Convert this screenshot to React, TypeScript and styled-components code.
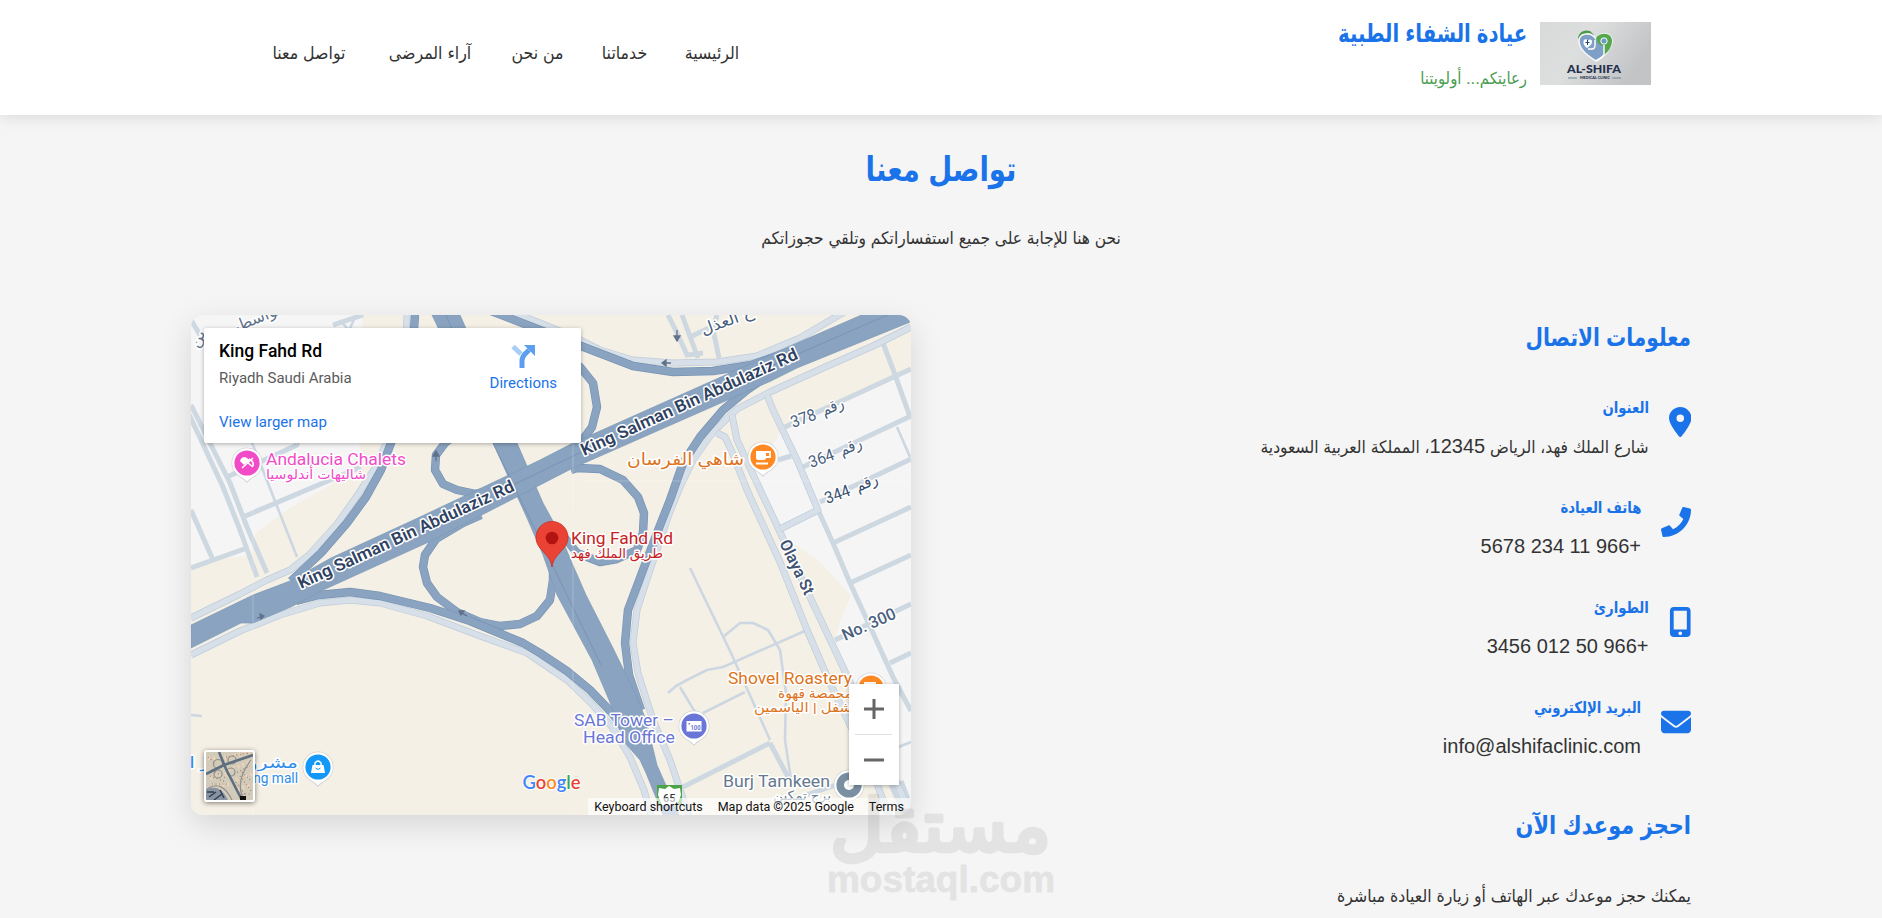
import React from 'react';
import styled, { createGlobalStyle } from 'styled-components';
import { FaLocationDot, FaMobileScreenButton, FaEnvelope } from 'react-icons/fa6';
import { FaPhone } from 'react-icons/fa';

const BLUE = '#1a73e8';
const UI = "'Liberation Sans', 'DejaVu Sans Condensed', 'DejaVu Sans', sans-serif";
const MAP_FONT = "Roboto, 'DejaVu Sans Condensed', 'DejaVu Sans', sans-serif";

const GlobalStyle = createGlobalStyle`
  * { box-sizing: border-box; }
  html, body { margin: 0; overflow: hidden; }
  body { background: #f5f5f5; color: #333; font-family: ${UI}; }
  h1, h2, h3, h4, p { margin: 0; }
`;

const Page = styled.div`
  position: relative;
  height: 918px;
  overflow: hidden;
  background: #f5f5f5;
`;

const Header = styled.header`
  position: relative;
  height: 115px;
  background: #fff;
  box-shadow: 0 2.5px 14px rgba(0, 0, 0, 0.1);
`;

const HeaderInner = styled.div`
  display: flex;
  justify-content: space-between;
  align-items: flex-start;
  width: 1420px;
  margin: 0 auto;
`;

const Brand = styled.div`
  display: flex;
  align-items: flex-start;
  gap: 13px;
  padding-top: 22px;
`;

const Logo = styled.svg`
  display: block;
  width: 111px;
  height: 63px;
  direction: ltr;
`;

const BrandText = styled.div`
  display: flex;
  flex-direction: column;
  white-space: nowrap;
`;

const BrandName = styled.h1`
  margin-top: -9px;
  font-size: 25.5px;
  line-height: 40px;
  color: ${BLUE};
  transform: scaleX(0.855);
  transform-origin: right;
`;

const Tagline = styled.p`
  margin-top: 9px;
  font-size: 16.5px;
  line-height: 32px;
  color: #4a9d4e;
`;

const Nav = styled.nav`
  display: flex;
  gap: 40px;
  padding: 37px 0 0 40px;
`;

const NavLink = styled.a<{ $width: number }>`
  display: flex;
  justify-content: center;
  width: ${(p) => p.$width}px;
  font-size: 17.6px;
  line-height: 32px;
  white-space: nowrap;
  color: #333;
`;

const Main = styled.main`
  width: 1500px;
  margin: 0 auto;
  padding-top: 34px;
`;

const PageTitle = styled.h2`
  font-size: 34px;
  line-height: 40px;
  text-align: center;
  color: ${BLUE};
  transform: scaleX(0.9);
`;

const Lead = styled.p`
  margin-top: 34px;
  font-size: 17.2px;
  line-height: 30px;
  text-align: center;
`;

const Columns = styled.div`
  display: flex;
  justify-content: space-between;
  margin-top: 62px;
`;

const Info = styled.section`
  display: flex;
  flex-direction: column;
  width: 720px;
  padding-top: 2px;
`;

const SectionTitle = styled.h3<{ $top?: number; $stretch?: number }>`
  margin-top: ${(p) => p.$top ?? 0}px;
  font-size: 25px;
  line-height: 40px;
  color: ${BLUE};
  transform: scaleX(${(p) => p.$stretch ?? 0.895});
  transform-origin: right;
`;

const ContactList = styled.div`
  display: flex;
  flex-direction: column;
  gap: 31px;
  margin-top: 36px;
`;

const ContactRow = styled.div`
  display: flex;
  gap: 20px;
  height: 69px;
`;

const IconSlot = styled.span<{ $width: number }>`
  display: block;
  flex: none;
  width: ${(p) => p.$width}px;
  height: 30px;
  margin-top: 14px;
  color: ${BLUE};
  svg { display: block; width: 100%; height: 100%; }
`;

const ContactText = styled.div`
  display: flex;
  flex-direction: column;
  gap: 8px;
  padding-top: 1px;
`;

const ContactLabel = styled.h4`
  font-size: 16px;
  line-height: 28px;
  color: ${BLUE};
  transform: scaleX(0.92);
  transform-origin: right;
`;

const ContactValue = styled.p`
  font-size: 20px;
  line-height: 32px;
  white-space: nowrap;
`;

const Words = styled.span`
  font-size: 17.3px;
`;

const BookingNote = styled.p`
  margin-top: 36px;
  font-size: 17.5px;
  line-height: 30px;
`;

const MapFrame = styled.section`
  position: relative;
  width: 720px;
  height: 500px;
  border-radius: 12px;
  overflow: hidden;
  direction: ltr;
  font-family: ${MAP_FONT};
`;

const MapShadow = styled.div`
  height: 500px;
  border-radius: 12px;
  box-shadow: 0 10px 32px rgba(0, 0, 0, 0.13);
`;

const MapSvg = styled.svg`
  display: block;
  font-family: ${MAP_FONT};
`;

const PlaceCard = styled.div`
  position: absolute;
  top: 13px;
  left: 13px;
  display: flex;
  justify-content: space-between;
  width: 377px;
  height: 115px;
  padding: 12px 24px 0 15px;
  border-radius: 2px;
  background: #fff;
  box-shadow: 0 1px 4px rgba(0, 0, 0, 0.3);
`;

const PlaceText = styled.div`
  display: flex;
  flex-direction: column;
`;

const PlaceName = styled.span`
  font-size: 17.5px;
  font-weight: 500;
  line-height: 22px;
  color: #000;
`;

const PlaceArea = styled.span`
  margin-top: 6px;
  font-size: 15px;
  line-height: 20px;
  color: #5b5b5b;
`;

const CardLink = styled.a<{ $top: number }>`
  margin-top: ${(p) => p.$top}px;
  font-size: 15px;
  line-height: 20px;
  color: ${BLUE};
`;

const DirectionsBox = styled.div`
  display: flex;
  flex-direction: column;
  align-items: center;
  padding-top: 4px;
`;

const ZoomControl = styled.div`
  position: absolute;
  top: 369px;
  left: 658px;
  display: flex;
  flex-direction: column;
  width: 50px;
  height: 101px;
  background: #fff;
  box-shadow: 0 1px 4px rgba(0, 0, 0, 0.3);
`;

const Thumb = styled.div`
  position: absolute;
  top: 435px;
  left: 13px;
  width: 51px;
  height: 52px;
  border: 2px solid #fff;
  border-radius: 3px;
  overflow: hidden;
  box-shadow: 0 1px 5px rgba(0, 0, 0, 0.5);
  svg { display: block; }
`;

const Credits = styled.div`
  position: absolute;
  right: 0;
  bottom: 0;
  display: flex;
  gap: 15px;
  height: 17px;
  padding: 0 7px 0 6px;
  background: rgba(255, 255, 255, 0.65);
  font-size: 12.5px;
  line-height: 18px;
  white-space: nowrap;
  color: #111;
`;

const Watermark = styled.svg`
  position: absolute;
  left: 820px;
  top: 790px;
  opacity: 0.085;
`;

type Pt = string;
const DARK = '#8aa3c0';
const LIGHT = '#d7dfe8';
const STREET = '#cdd8e1';

const Road = ({ d, w, c }: { d: Pt; w: number; c: string }) => (
  <path d={`M${d}`} fill="none" stroke={c} strokeWidth={w} strokeLinejoin="round" />
);

const CasedRoad = ({ d, w = 7 }: { d: Pt; w?: number }) => (
  <>
    <Road d={d} w={w} c="#bfcddb" />
    <Road d={d} w={w - 1.4} c={LIGHT} />
  </>
);

interface LabelProps {
  x: number;
  y: number;
  len: number;
  size: number;
  color: string;
  text: string;
  rotate?: number;
  weight?: number;
  rtl?: boolean;
}

const Label = ({ x, y, len, size, color, text, rotate = 0, weight = 400, rtl }: LabelProps) => (
  <text
    x={rtl ? x + len : x}
    y={y}
    transform={rotate ? `rotate(${rotate} ${x} ${y})` : undefined}
    textLength={len}
    lengthAdjust="spacingAndGlyphs"
    fontSize={size}
    fontWeight={weight}
    fill={color}
    stroke="#fff"
    strokeWidth="3"
    strokeLinejoin="round"
    paintOrder="stroke"
    direction={rtl ? 'rtl' : 'ltr'}
  >
    {text}
  </text>
);

const Pin = ({ x, y, color, children }: { x: number; y: number; color: string; children?: React.ReactNode }) => (
  <g transform={`translate(${x} ${y})`}>
    <path d="M0 20 C-3 16-7 15-11 11 A15.5 15.5 0 1 1 11 11 C7 15 3 16 0 20Z" fill="#b9bec6" opacity=".6" />
    <path d="M0 18.5 C-3 15-7 14-10.5 10.5 A14.8 14.8 0 1 1 10.5 10.5 C7 14 3 15 0 18.5Z" fill="#fff" />
    <circle r="12.6" fill={color} />
    {children}
  </g>
);

const darkRamps: Pt[] = [
  '375,40 390,53 402,68 406,92 401,112 388,130 378,138',
  '262,122 254,128 245,140 244,155 252,169 266,175 285,179 310,172',
  '380,155 386,153 409,154 432,165 447,182 453,198 452,218 446,235 426,244 409,247 386,238 370,218',
  '290,200 272,208 245,224 234,240 232,252 236,268 246,282 266,297 289,307 309,311 329,309 346,301 359,285 362,265 362,245',
  '105,286 128,280 159,277 189,281 239,293 279,306 332,328 349,338 376,356 399,375 421,398 445,430',
  '224,0 220,60 200,128 190,155 175,182 156,208 130,238 100,266',
  '300,-4 349,15 390,31 442,51 482,57 522,56 560,50 600,36',
  '575,62 556,75 532,95 509,122 492,148 479,185 466,218 452,255 437,295 434,328 438,360 450,395',
];

const lightRoads: Pt[] = [
  '0,340 49,316 89,300 129,288 159,285 189,288 236,301 289,321 336,338 376,365 399,387 421,412 439,442 453,475 461,504',
  '216,0 213,60 195,128 186,150 168,178 146,209 118,240 99,255 76,265 49,279 0,303',
  '318,-4 349,8 379,20 409,35 442,45 482,48 526,47 566,41 609,23 655,-4',
  '720,12 682,31 632,53 579,77 546,94 522,117 502,145 489,172 477,202 459,255 446,295 442,328 447,358 462,405 479,445 499,504',
  '541,100 546,125 566,168 589,217 619,282 659,367 700,455 720,500',
  '526,118 534,122 541,137 556,175 589,247 616,315 639,368 682,458 699,504',
  '576,80 582,95 606,145 627,195 589,214',
];

const streets: Pt[] = [
  '594,112 720,54', '612,152 720,101', '629,187 720,144', '642,228 720,192', '659,268 720,240',
  '644,325 720,289', '699,348 720,338', '692,28 703,57 719,102', '627,195 642,228 659,268 682,318 702,362 720,396',
  '0,90 39,168 56,212 76,258', '-4,95 32,172 49,215 66,262', '0,195 22,245', '36,162 106,130',
  '52,202 132,168 170,152', '0,253 56,233', '477,0 486,18 497,42', '491,0 507,43', '499,22 520,12', '526,0 522,14 528,43',
  '492,472 579,428', '579,428 597,462', '142,10 172,0', '0,5 12,25', '497,40 512,38', '587,145 600,141',
  '700,470 714,500', '710,466 720,492', '615,480 645,470',
];

const thinStreets: Pt[] = [
  '499,253 540,338 579,425', '532,322 549,308 562,308 577,315 589,335 595,378 594,425 600,465',
  '616,315 532,352 516,355 496,365 485,371 477,378', '489,372 504,397', '512,398 554,377', '60,125 106,242',
  '106,132 165,0', '706,112 719,142', '0,400 11,401', '149,5 160,18', '705,433 720,427',
];

const MapCanvas = () => (
  <MapSvg width="720" height="500" viewBox="0 0 720 500">
    <rect width="720" height="500" fill="#f5f0e5" />
    <path d="M0 0H172L168 128 170 140 140 170 100 192 65 218 60 240 15 246 0 253Z" fill="#f5f5f6" />
    <path d="M592 112L720 54V500H712L644 325 648 310 660 280 626 244 592 222 562 160 583 128Z" fill="#f5f5f6" />
    {streets.map((d) => <Road key={d} d={d} w={5} c={STREET} />)}
    {thinStreets.map((d) => <Road key={d} d={d} w={2.6} c="#ccd7e2" />)}
    {lightRoads.map((d) => <CasedRoad key={d} d={d} />)}
    {darkRamps.map((d) => <g key={d}><Road d={d} w={8.4} c="#7593b4" /><Road d={d} w={7.2} c={DARK} /></g>)}
    <path d="M241 0L302 128 336 203 352 240 366 280 401 345 418 385 434 428 449 445 455 458 472 500H488L466 450 455 405 445 380 422 333 395 280 381 248 368 217 352 188 326 128 269 0Z" fill={DARK} stroke="#7c99b8" strokeWidth=".7" />
    <path d="M0 310L62 280 99 266 140 243 229 202 322 158 349 145 382 128 606 28 682-5H724V5L606 53 580 66 382 153 349 170 322 184 240 226 130 276 100 292 62 308H50L0 333Z" fill={DARK} stroke="#7c99b8" strokeWidth=".7" />
    <path d="M322 170L382 141 600 42 724-12M302 128L410 350M255 0L300 110" fill="none" stroke="#7390b2" strokeWidth=".8" />
    <path d="M62 130V500M382 128V500M390 166H720" stroke="#fff" strokeWidth=".6" opacity=".4" />
    <g stroke="#60718a" strokeWidth="1.3" fill="#60718a">
      <path d="M471 48H480M471 48l4-3v6zM486 15v10M486 26l-3-5h6zM245 138v8M245 136l-3 5h6zM66 303l7-2M73 301l-4-2 1 5zM269 297l7 4M268 296l5 0-3 4z" />
    </g>

    <Label x={110} y={274} len={236} size={17} rotate={-24.7} weight={600} color="#2f4262" text="King Salman Bin Abdulaziz Rd" />
    <Label x={393} y={141} len={236} size={17} rotate={-24.4} weight={600} color="#2f4262" text="King Salman Bin Abdulaziz Rd" />
    <Label x={588} y={228} len={59} size={16.5} rotate={64} weight={600} color="#3f5473" text="Olaya St" />
    <Label x={654} y={326} len={57} size={16.5} rotate={-24} weight={500} color="#4a607d" text="No. 300" />
    <Label x={602} y={113} len={26} size={16.5} rotate={-20} color="#4a607d" text="378" />
    <Label x={633} y={101} len={23} size={16} rotate={-24} color="#4a607d" text="رقم" rtl />
    <Label x={620} y={153} len={26} size={16.5} rotate={-20} color="#4a607d" text="364" />
    <Label x={651} y={141} len={23} size={16} rotate={-24} color="#4a607d" text="رقم" rtl />
    <Label x={636} y={189} len={26} size={16.5} rotate={-20} color="#3a5070" text="344" />
    <Label x={667} y={177} len={23} size={16} rotate={-24} color="#3a5070" text="رقم" rtl />
    <Label x={512} y={20} len={55} size={16} rotate={-20} color="#4a607d" text="ح العذل" rtl />
    <Label x={38} y={20} len={62} size={16} rotate={-22} color="#60718a" text="الواسطي" rtl />
    <Label x={7} y={34} len={18} size={14} rotate={-65} color="#60718a" text="بن" rtl />

    <Label x={75} y={150} len={140} size={16.8} color="#f24bc8" text="Andalucia Chalets" />
    <Label x={75} y={164} len={100} size={13.5} color="#f24bc8" text="شاليهات أندلوسيا" rtl />
    <Label x={436} y={150} len={117} size={16.5} color="#dd7320" text="شاهي الفرسان" rtl />
    <Label x={380} y={229} len={102} size={17} color="#c5221f" text="King Fahd Rd" />
    <Label x={380} y={243} len={92} size={13.5} color="#c5221f" text="طريق الملك فهد" rtl />
    <Label x={537} y={369} len={124} size={17} color="#dd7320" text="Shovel Roastery" />
    <Label x={587} y={383} len={74} size={13.5} color="#dd7320" text="محمصة قهوة" rtl />
    <Label x={563} y={397} len={98} size={13.5} color="#dd7320" text="شفل | الياسمين" rtl />
    <Label x={383} y={411} len={100} size={17} color="#6a76d6" text="SAB Tower –" />
    <Label x={392} y={428} len={92} size={17} color="#6a76d6" text="Head Office" />
    <Label x={532} y={472} len={107} size={17} color="#65798f" text="Burj Tamkeen" />
    <Label x={582} y={485} len={58} size={13} color="#65798f" text="برج تمكين" rtl />
    <Label x={-14} y={453} len={121} size={15.5} color="#2f8ceb" text="مشروع عبر الـ" rtl />
    <Label x={20} y={468} len={87} size={14} color="#2f8ceb" text="Shopping mall" />

    <Pin x={56} y={148} color="#f24bc8">
      <path d="M-7-2Q-6-6-2-6L3-3-3 2Z" fill="#fff" />
      <path d="M-5 5L6-5M2-4Q7-2 6 3M1 0L6 4" stroke="#fff" strokeWidth="1.6" fill="none" />
    </Pin>
    <Pin x={572} y={142} color="#ff8a24">
      <path d="M-7-6H3V1Q3 3 1 3H-5Q-7 3-7 1Z" fill="#fff" />
      <path d="M3-5H7V0H3M-7 6.5H5" fill="none" stroke="#fff" strokeWidth="1.8" />
    </Pin>
    <Pin x={503} y={411} color="#6a76d6">
      <path d="M-7.500-5H7.500V5.500H-7.500Z" fill="#fff" />
      <text x="-3.500" y="3.800" fontSize="7" fontWeight="700" fill="#6a76d6" textLength="10" lengthAdjust="spacingAndGlyphs">100</text>
      <path d="M-5.500-3h1.500v1.500h-1.500z" fill="#6a76d6" />
    </Pin>
    <Pin x={127} y={452} color="#1398f7">
      <path d="M-5.5-2H5.5L7 6H-7Z" fill="#fff" />
      <path d="M-3-1V-4Q0-8 3-4V-1" fill="none" stroke="#fff" strokeWidth="1.5" />
      <path d="M-2.500 1Q0 4 2.500 1" fill="none" stroke="#1398f7" strokeWidth="1" />
    </Pin>
    <Pin x={680} y={373} color="#ff8a24"><path d="M-7-6H5V0H-7Z" fill="#fff" /></Pin>
    <Pin x={658} y={470} color="#7b8fa3"><circle r="5" fill="#fff" /></Pin>

    <path d="M361 252C360 244 355 240 350 234A16 16 0 1 1 372 234C367 240 362 244 361 252Z" fill="#ea4335" stroke="#c5281c" strokeWidth=".7" />
    <circle cx="361" cy="223" r="6.300" fill="#b31412" />

    <path d="M466 470H491V490H466Z" fill="#4ba446" />
    <path d="M468 473L474 474 478 471 483 474 489 473 490 480 486 490H471L467 480Z" fill="#fff" />
    <text x="472" y="487" fontSize="11" fontWeight="500" fill="#333">65</text>

    <text x="331.500" y="473.500" fontFamily="Lato, sans-serif" fontSize="19.500" textLength="58" lengthAdjust="spacingAndGlyphs" stroke="#fff" strokeWidth="1.600" paintOrder="stroke" fontWeight="600">
      <tspan fill="#4285f4">G</tspan><tspan fill="#ea4335">o</tspan><tspan fill="#fb8c1c">o</tspan><tspan fill="#4285f4">g</tspan><tspan fill="#34a853">l</tspan><tspan fill="#ea4335">e</tspan>
    </text>
  </MapSvg>
);

const DirectionsIcon = () => (
  <svg width="24" height="24" viewBox="0 0 24 24">
    <path d="M2 2.500L10 10" stroke="#a9cdf3" strokeWidth="5" />
    <path d="M11 24V17Q11 13 14 10L18 6" fill="none" stroke="#5c9ff0" strokeWidth="5" />
    <path d="M13 1H24V12Z" fill="#5c9ff0" />
  </svg>
);

const SatelliteView = () => (
  <svg width="47" height="48" viewBox="0 0 47 48">
    <rect width="47" height="48" fill="#d3cbb9" />
    <g stroke="#ecd2bb" strokeWidth="4" strokeDasharray="2 3">
      <path d="M18 6L44 0M22 18L46 10M30 28L46 22M32 38L46 32M4 26L22 22M2 6H12M6 34L26 32" />
    </g>
    <g stroke="#a07f68" strokeWidth="1.200" strokeDasharray="1 2.500">
      <path d="M20 5L44 1M4 24L20 30M34 24L46 40M6 32H22M28 22L44 14M32 42H46M2 5L10 12M36 20L46 30M6 18L20 26M30 30L40 44" />
    </g>
    <g fill="none" stroke="#8d908c" strokeWidth="1.200">
      <circle cx="12" cy="12" r="4.500" /><circle cx="26" cy="8" r="4" /><circle cx="25" cy="20" r="4" /><circle cx="12" cy="22" r="4" />
      <path d="M0 38Q15 26 26 48M38 48Q28 30 45 8" />
    </g>
    <path d="M0 37Q14 31 22 48H0Z" fill="#8793a3" />
    <path d="M3 45L10 40M8 48L16 42M14 38L18 46M1 40H8" stroke="#343f50" strokeWidth="1.500" />
    <path d="M0 22L18 13 47 3M13 0L20 17 36 48" fill="none" stroke="#5e6f80" strokeWidth="2.600" />
    <path d="M34 44H40V48H34Z" fill="#111" />
  </svg>
);

const ClinicLogo = () => (
  <Logo viewBox="0 0 111 63">
    <defs>
      <linearGradient id="plate" x1="0" y1="0" x2="1" y2=".4">
        <stop offset="0" stopColor="#d8dada" />
        <stop offset=".45" stopColor="#dddede" />
        <stop offset="1" stopColor="#c3c4c6" />
      </linearGradient>
    </defs>
    <rect width="111" height="63" fill="url(#plate)" />
    <path d="M38 15Q41 7 50 9L54 13 45 15 40 21Z" fill="#4b9a48" />
    <path d="M56 39C46 33 39 26 39 19C39 11 51 9 56 17C60 9 73 10 72 20C71 28 65 34 56 39Z" fill="#7fa0c6" stroke="#f4f4f4" strokeWidth="1.600" />
    <path d="M56 16C61 9 73 11 72 20C71 26 68 30 64 33V24C58 23 57 20 56 16Z" fill="#55a84c" />
    <path d="M47 26C43 23 43 20 44 18C45 17 47 17 48 19C49 17 52 17 52 20C52 22 50 24 47 26Z" fill="#fff" />
    <path d="M47.500 18V23M45.500 20.500H49.500" stroke="#294466" strokeWidth="1" />
    <path d="M48 27H52Q55 27 55 23V18M64 23V33Q61 37 56 39" fill="none" stroke="#fff" strokeWidth="1.400" />
    <circle cx="64" cy="19" r="3.200" fill="#6e9bc5" stroke="#fff" strokeWidth="1" />
    <text x="27" y="51" fontFamily="Lato, sans-serif" fontSize="11.500" fontWeight="900" textLength="54" lengthAdjust="spacingAndGlyphs" fill="#23304d">AL-SHIFA</text>
    <text x="40" y="57" fontFamily="Lato, sans-serif" fontSize="4" fontWeight="900" textLength="30" lengthAdjust="spacingAndGlyphs" fill="#23304d">MEDICAL CLINIC</text>
    <path d="M28 56H37M72 56H81" stroke="#6f8794" strokeWidth="1" />
  </Logo>
);

const navItems = [
  { label: 'الرئيسية', width: 50 },
  { label: 'خدماتنا', width: 45 },
  { label: 'من نحن', width: 49 },
  { label: 'آراء المرضى', width: 86 },
  { label: 'تواصل معنا', width: 76 },
];

const contacts = [
  {
    icon: <FaLocationDot />, width: 22.5, label: 'العنوان',
    value: <><Words>شارع الملك فهد، الرياض </Words>12345<Words>، المملكة العربية السعودية</Words></>,
  },
  { icon: <FaPhone />, width: 30, label: 'هاتف العيادة', value: '+966 11 234 5678' },
  { icon: <FaMobileScreenButton />, width: 22.5, label: 'الطوارئ', value: '+966 50 012 3456' },
  { icon: <FaEnvelope />, width: 30, label: 'البريد الإلكتروني', value: 'info@alshifaclinic.com' },
];

export default function App() {
  return (
    <Page dir="rtl" lang="ar">
      <GlobalStyle />
      <Header>
        <HeaderInner>
          <Brand>
            <ClinicLogo />
            <BrandText>
              <BrandName>عيادة الشفاء الطبية</BrandName>
              <Tagline>رعايتكم... أولويتنا</Tagline>
            </BrandText>
          </Brand>
          <Nav>
            {navItems.map((n) => <NavLink key={n.label} $width={n.width}>{n.label}</NavLink>)}
          </Nav>
        </HeaderInner>
      </Header>

      <Main>
        <PageTitle>تواصل معنا</PageTitle>
        <Lead>نحن هنا للإجابة على جميع استفساراتكم وتلقي حجوزاتكم</Lead>
        <Columns>
          <Info>
            <SectionTitle>معلومات الاتصال</SectionTitle>
            <ContactList>
              {contacts.map((c) => (
                <ContactRow key={c.label}>
                  <IconSlot $width={c.width}>{c.icon}</IconSlot>
                  <ContactText>
                    <ContactLabel>{c.label}</ContactLabel>
                    <ContactValue>{c.value}</ContactValue>
                  </ContactText>
                </ContactRow>
              ))}
            </ContactList>
            <SectionTitle $top={43} $stretch={0.93}>احجز موعدك الآن</SectionTitle>
            <BookingNote>يمكنك حجز موعدك عبر الهاتف أو زيارة العيادة مباشرة</BookingNote>
          </Info>

          <MapShadow>
            <MapFrame>
              <MapCanvas />
              <PlaceCard>
                <PlaceText>
                  <PlaceName>King Fahd Rd</PlaceName>
                  <PlaceArea>Riyadh Saudi Arabia</PlaceArea>
                  <CardLink $top={24}>View larger map</CardLink>
                </PlaceText>
                <DirectionsBox>
                  <DirectionsIcon />
                  <CardLink $top={5}>Directions</CardLink>
                </DirectionsBox>
              </PlaceCard>
              <Thumb><SatelliteView /></Thumb>
              <Credits>
                <span>Keyboard shortcuts</span>
                <span>Map data ©2025 Google</span>
                <span>Terms</span>
              </Credits>
              <ZoomControl>
                <svg width="50" height="101" viewBox="0 0 50 101">
                  <path d="M15 25H35M25 15V35M15 76H35" stroke="#666" strokeWidth="3" />
                  <path d="M6 50.500H43" stroke="#e0e0e0" strokeWidth="1" />
                </svg>
              </ZoomControl>
            </MapFrame>
          </MapShadow>
        </Columns>
      </Main>

      <Watermark width="244" height="128" viewBox="0 0 244 128">
        <g fill="#333" stroke="#333" strokeLinejoin="round">
          <text x="231" y="61" direction="rtl" fontFamily="'DejaVu Sans', sans-serif" fontSize="72" fontWeight="400" strokeWidth="4.500" textLength="221" lengthAdjust="spacingAndGlyphs">مستقل</text>
          <text x="7" y="102" direction="ltr" fontFamily="'Liberation Sans', sans-serif" fontSize="36" fontWeight="700" strokeWidth=".8" textLength="228" lengthAdjust="spacingAndGlyphs">mostaql.com</text>
        </g>
      </Watermark>
    </Page>
  );
}
